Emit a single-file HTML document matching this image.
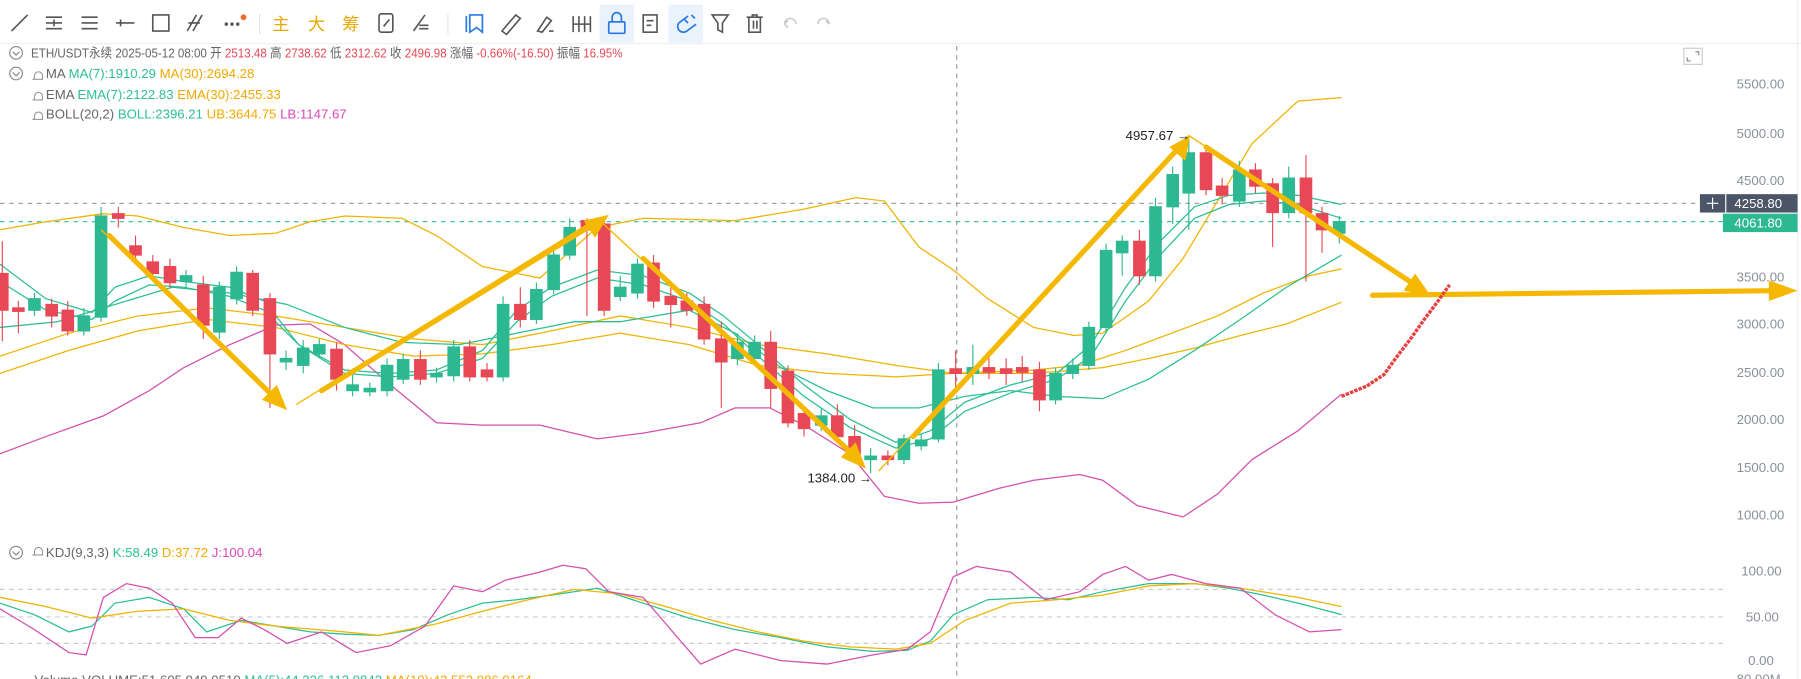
<!DOCTYPE html>
<html><head><meta charset="utf-8"><style>
html,body{margin:0;padding:0;background:#fff;overflow:hidden}
svg{display:block}
text{font-family:"Liberation Sans","Noto Sans CJK SC",sans-serif}
</style></head><body>
<svg width="1801" height="679" viewBox="0 0 1568 591" preserveAspectRatio="none" xmlns="http://www.w3.org/2000/svg">
<rect width="1568" height="591" fill="#fff"/>
<line x1="0" y1="38" x2="1568" y2="38" stroke="#eceef1"/>
<rect x="522" y="4" width="30" height="33" fill="#eaf2fc"/>
<rect x="582" y="4" width="30" height="33" fill="#eaf2fc"/>
<g stroke="#555" stroke-width="1.4" fill="none">
<path d="M10 27 L24 13"/>
<path d="M40 15h14M40 20h14M40 25h14M47 17v6"/>
<path d="M71 15h14M71 20h14M71 25h14"/>
<path d="M101 20h16M105 17v6"/>
<rect x="133" y="13" width="14" height="14"/>
<path d="M163 27l8-14M168 27l8-14M164 20h10"/>
</g>
<g fill="#555"><circle cx="197" cy="21" r="1.5"/><circle cx="202" cy="21" r="1.5"/><circle cx="207" cy="21" r="1.5"/></g>
<circle cx="212" cy="15" r="2.5" fill="#f06a2a"/>
<line x1="226" y1="12" x2="226" y2="30" stroke="#e2e4e8"/>
<text x="237" y="26" font-size="15" fill="#e9a800">主</text>
<text x="268" y="26" font-size="15" fill="#e9a800">大</text>
<text x="298" y="26" font-size="15" fill="#e9a800">筹</text>
<g stroke="#555" stroke-width="1.4" fill="none">
<rect x="330" y="12" width="12" height="16" rx="2"/><path d="M334 23l5-6"/>
<path d="M360 27l10-14M365 22h8M365 25h8"/>
</g>
<line x1="390" y1="12" x2="390" y2="30" stroke="#e2e4e8"/>
<g stroke="#2a7be4" stroke-width="1.5" fill="none">
<path d="M406 14v14M409 13h11v15l-5-4-6 4z"/>
<path d="M599 14l-8 6a5 5 0 0 0 7 7l8-6M596 17l3 3M602 13l3 3"/>
<rect x="530" y="19" width="14" height="10" rx="1"/><path d="M533 19v-4a4 4 0 0 1 8 0v4"/>
</g>
<g stroke="#555" stroke-width="1.4" fill="none">
<path d="M437 27l12-14 4 3-12 14z"/>
<path d="M468 27l8-12 4 3-8 10zM478 27h4"/>
<path d="M499 14v14M504 14v14M509 14v14M514 14v14M499 21h15"/>
<rect x="560" y="13" width="12" height="15"/><path d="M563 18h6M563 22h4"/>
<path d="M620 13h14l-5 7v8l-4-2v-6z"/>
<path d="M650 15h14M655 15v-2h4v2M652 15v13h10v-13M656 18v7M659 18v7"/>
</g>
<g stroke="#ccc" stroke-width="1.4" fill="none"><path d="M683 21a5 5 0 0 1 10 0M683 21l3-3M683 21l3 3"/><path d="M722 21a5 5 0 0 0-10 0M722 21l-3-3"/></g>
<g font-size="11.5">
<circle cx="14" cy="46" r="5.5" stroke="#888" fill="none"/><path d="M11 45l3 3 3-3" stroke="#888" fill="none"/>
<text x="27" y="50" fill="#666" textLength="515" lengthAdjust="spacingAndGlyphs">ETH/USDT永续  2025-05-12 08:00  开 <tspan fill="#e84855">2513.48</tspan> 高 <tspan fill="#e84855">2738.62</tspan> 低 <tspan fill="#e84855">2312.62</tspan> 收 <tspan fill="#e84855">2496.98</tspan> 涨幅 <tspan fill="#e84855">-0.66%(-16.50)</tspan> 振幅 <tspan fill="#e84855">16.95%</tspan></text>
<circle cx="14" cy="64" r="5.5" stroke="#888" fill="none"/><path d="M11 63l3 3 3-3" stroke="#888" fill="none"/>
<text x="40" y="68" fill="#666">MA  <tspan fill="#2cbf95">MA(7):1910.29</tspan>  <tspan fill="#f0a800">MA(30):2694.28</tspan></text>
<text x="40" y="86" fill="#666">EMA  <tspan fill="#2cbf95">EMA(7):2122.83</tspan>  <tspan fill="#f0a800">EMA(30):2455.33</tspan></text>
<text x="40" y="103" fill="#666">BOLL(20,2)  <tspan fill="#2cbf95">BOLL:2396.21</tspan>  <tspan fill="#f0a800">UB:3644.75</tspan>  <tspan fill="#d946b6">LB:1147.67</tspan></text>
<g stroke="#999" fill="none" stroke-width="1"><path d="M30 66a3.5 3.5 0 0 1 7 0v3h-8l1-1zM30 84a3.5 3.5 0 0 1 7 0v3h-8l1-1zM30 101a3.5 3.5 0 0 1 7 0v3h-8l1-1z"/></g>
</g>
<rect x="1466" y="42" width="16" height="14" stroke="#ccc" fill="none"/>
<path d="M1469 50v3h3M1479 48v-3h-3" stroke="#888" fill="none"/>
<line x1="1565" y1="0" x2="1565" y2="591" stroke="#eceef1"/>
<g font-size="11.5" fill="#8a8f99">
<text x="1512" y="77">5500.00</text><text x="1512" y="120">5000.00</text><text x="1512" y="161">4500.00</text>
<text x="1512" y="245">3500.00</text><text x="1512" y="286">3000.00</text><text x="1512" y="328">2500.00</text>
<text x="1512" y="369">2000.00</text><text x="1512" y="411">1500.00</text><text x="1512" y="452">1000.00</text>
<text x="1516" y="501">100.00</text><text x="1520" y="541">50.00</text><text x="1522" y="579">0.00</text><text x="1512" y="595">80.00M</text>
</g>
<line x1="0" y1="177" x2="1480" y2="177" stroke="#999" stroke-dasharray="4,4"/>
<line x1="0" y1="193" x2="1500" y2="193" stroke="#2cbf95" stroke-dasharray="4,4"/>
<line x1="833" y1="40" x2="833" y2="591" stroke="#999" stroke-dasharray="4,4"/>
<line x1="0" y1="513" x2="1500" y2="513" stroke="#ccc" stroke-dasharray="4,4"/>
<line x1="0" y1="537" x2="1500" y2="537" stroke="#ccc" stroke-dasharray="4,4"/>
<line x1="0" y1="560" x2="1500" y2="560" stroke="#ccc" stroke-dasharray="4,4"/>
<rect x="1480" y="169" width="22" height="16" fill="#4b5567"/><path d="M1486 177h10M1491 172v10" stroke="#fff"/>
<rect x="1503" y="169" width="62" height="16" fill="#4b5567"/><text x="1510" y="181" font-size="11.5" fill="#fff">4258.80</text>
<rect x="1500" y="186" width="65" height="16" fill="#2cb890"/><text x="1510" y="198" font-size="11.5" fill="#fff">4061.80</text>
<g fill="none" stroke-width="1.1">
<polyline stroke="#f0b400" points="0,200 40,193 90,186 120,188 160,198 200,205 240,203 270,193 300,188 350,190 380,205 420,232 470,242 520,198 560,190 640,192 700,182 745,172 770,175 800,215 830,235 860,260 900,285 935,292 960,290 1000,262 1030,225 1060,175 1090,125 1130,88 1168,85"/>
<polyline stroke="#d44fae" points="0,395 40,380 90,362 130,340 160,320 200,300 240,283 270,282 300,300 340,335 380,368 420,370 470,370 520,382 560,377 610,368 640,355 670,355 700,370 740,395 770,432 800,438 830,437 870,425 900,418 940,413 960,418 990,440 1030,450 1060,430 1090,400 1130,375 1168,343"/>
<polyline stroke="#f0b400" points="0,310 60,290 120,275 180,268 240,275 300,285 360,295 420,300 480,288 540,275 600,285 660,300 720,308 780,318 830,325 900,322 940,318 980,305 1020,290 1060,275 1100,255 1140,240 1168,234"/>
<polyline stroke="#f0b400" points="0,325 60,305 120,288 180,278 240,285 300,300 360,310 420,308 480,300 540,290 600,300 660,318 720,325 780,328 830,325 900,325 960,320 1000,312 1040,303 1080,292 1120,282 1168,263"/>
<polyline stroke="#2cbf95" points="0,285 50,280 100,265 150,250 200,255 250,265 300,285 350,298 400,300 450,290 500,280 540,280 600,270 640,290 680,320 720,340 760,355 800,355 840,345 880,340 920,345 960,347 1000,330 1040,305 1080,278 1120,250 1168,222"/>
<polyline stroke="#2cbf95" points="0,230 40,260 80,272 100,250 130,240 160,245 200,250 230,262 260,300 300,322 340,325 380,322 420,305 450,270 480,250 520,235 560,240 600,255 630,275 660,300 700,335 740,365 780,385 810,375 840,350 880,335 920,325 950,300 980,250 1010,210 1040,180 1070,170 1100,168 1130,170 1168,178"/>
<polyline stroke="#2cbf95" points="0,245 40,270 80,278 100,262 130,248 160,250 200,258 230,270 260,300 300,325 340,328 380,325 420,312 450,280 480,258 520,242 560,248 600,262 630,282 660,310 700,345 740,372 780,390 810,382 840,358 880,342 920,330 950,310 980,262 1010,222 1040,190 1070,178 1100,175 1130,178 1168,190"/>
</g>
<g stroke-width="1">
<g fill="#e84855" stroke="#e84855">
<line x1="2" y1="210" x2="2" y2="297"/><rect x="-3" y="238" width="10" height="32"/>
<line x1="16" y1="262" x2="16" y2="290"/><rect x="11" y="268" width="10" height="3"/>
<line x1="45" y1="260" x2="45" y2="285"/><rect x="40" y="265" width="10" height="10"/>
<line x1="59" y1="262" x2="59" y2="292"/><rect x="54" y="270" width="10" height="18"/>
<line x1="103" y1="180" x2="103" y2="198"/><rect x="98" y="186" width="10" height="4"/>
<line x1="118" y1="205" x2="118" y2="230"/><rect x="113" y="214" width="10" height="8"/>
<line x1="133" y1="222" x2="133" y2="245"/><rect x="128" y="228" width="10" height="10"/>
<line x1="148" y1="225" x2="148" y2="250"/><rect x="143" y="232" width="10" height="14"/>
<line x1="177" y1="240" x2="177" y2="295"/><rect x="172" y="248" width="10" height="35"/>
<line x1="220" y1="235" x2="220" y2="275"/><rect x="215" y="238" width="10" height="32"/>
<line x1="235" y1="255" x2="235" y2="355"/><rect x="230" y="260" width="10" height="48"/>
<line x1="293" y1="298" x2="293" y2="340"/><rect x="288" y="304" width="10" height="26"/>
<line x1="366" y1="305" x2="366" y2="335"/><rect x="361" y="313" width="10" height="17"/>
<line x1="409" y1="296" x2="409" y2="332"/><rect x="404" y="302" width="10" height="26"/>
<line x1="424" y1="316" x2="424" y2="332"/><rect x="419" y="322" width="10" height="6"/>
<line x1="453" y1="250" x2="453" y2="285"/><rect x="448" y="265" width="10" height="13"/>
<line x1="511" y1="190" x2="511" y2="275"/><rect x="506" y="192" width="10" height="8"/>
<line x1="526" y1="190" x2="526" y2="275"/><rect x="521" y="195" width="10" height="75"/>
<line x1="569" y1="222" x2="569" y2="268"/><rect x="564" y="229" width="10" height="33"/>
<line x1="584" y1="250" x2="584" y2="285"/><rect x="579" y="258" width="10" height="7"/>
<line x1="598" y1="255" x2="598" y2="275"/><rect x="593" y="262" width="10" height="8"/>
<line x1="613" y1="258" x2="613" y2="300"/><rect x="608" y="265" width="10" height="30"/>
<line x1="628" y1="280" x2="628" y2="355"/><rect x="623" y="295" width="10" height="20"/>
<line x1="671" y1="288" x2="671" y2="355"/><rect x="666" y="298" width="10" height="40"/>
<line x1="686" y1="318" x2="686" y2="372"/><rect x="681" y="323" width="10" height="45"/>
<line x1="700" y1="355" x2="700" y2="380"/><rect x="695" y="360" width="10" height="13"/>
<line x1="729" y1="352" x2="729" y2="385"/><rect x="724" y="362" width="10" height="18"/>
<line x1="744" y1="370" x2="744" y2="400"/><rect x="739" y="380" width="10" height="15"/>
<line x1="773" y1="392" x2="773" y2="405"/><rect x="768" y="397" width="10" height="3"/>
<line x1="832" y1="305" x2="832" y2="340"/><rect x="827" y="321" width="10" height="4"/>
<line x1="861" y1="310" x2="861" y2="330"/><rect x="856" y="320" width="10" height="4"/>
<line x1="876" y1="312" x2="876" y2="335"/><rect x="871" y="321" width="10" height="4"/>
<line x1="890" y1="310" x2="890" y2="332"/><rect x="885" y="320" width="10" height="4"/>
<line x1="905" y1="315" x2="905" y2="358"/><rect x="900" y="322" width="10" height="26"/>
<line x1="992" y1="200" x2="992" y2="248"/><rect x="987" y="210" width="10" height="30"/>
<line x1="1050" y1="128" x2="1050" y2="170"/><rect x="1045" y="133" width="10" height="32"/>
<line x1="1064" y1="155" x2="1064" y2="178"/><rect x="1059" y="162" width="10" height="8"/>
<line x1="1093" y1="142" x2="1093" y2="168"/><rect x="1088" y="148" width="10" height="14"/>
<line x1="1108" y1="155" x2="1108" y2="215"/><rect x="1103" y="160" width="10" height="25"/>
<line x1="1137" y1="135" x2="1137" y2="245"/><rect x="1132" y="155" width="10" height="30"/>
<line x1="1151" y1="180" x2="1151" y2="220"/><rect x="1146" y="186" width="10" height="14"/>
</g>
<g fill="#2cb890" stroke="#2cb890">
<line x1="30" y1="255" x2="30" y2="275"/><rect x="25" y="260" width="10" height="10"/>
<line x1="73" y1="268" x2="73" y2="292"/><rect x="68" y="275" width="10" height="13"/>
<line x1="88" y1="180" x2="88" y2="280"/><rect x="83" y="188" width="10" height="88"/>
<line x1="162" y1="235" x2="162" y2="250"/><rect x="157" y="240" width="10" height="5"/>
<line x1="191" y1="245" x2="191" y2="295"/><rect x="186" y="250" width="10" height="39"/>
<line x1="206" y1="232" x2="206" y2="265"/><rect x="201" y="237" width="10" height="23"/>
<line x1="249" y1="305" x2="249" y2="322"/><rect x="244" y="312" width="10" height="3"/>
<line x1="264" y1="296" x2="264" y2="325"/><rect x="259" y="303" width="10" height="15"/>
<line x1="278" y1="295" x2="278" y2="312"/><rect x="273" y="300" width="10" height="8"/>
<line x1="307" y1="325" x2="307" y2="345"/><rect x="302" y="335" width="10" height="5"/>
<line x1="322" y1="333" x2="322" y2="345"/><rect x="317" y="338" width="10" height="3"/>
<line x1="337" y1="312" x2="337" y2="345"/><rect x="332" y="318" width="10" height="22"/>
<line x1="351" y1="308" x2="351" y2="334"/><rect x="346" y="313" width="10" height="17"/>
<line x1="380" y1="320" x2="380" y2="333"/><rect x="375" y="325" width="10" height="3"/>
<line x1="395" y1="296" x2="395" y2="332"/><rect x="390" y="302" width="10" height="25"/>
<line x1="438" y1="258" x2="438" y2="332"/><rect x="433" y="265" width="10" height="63"/>
<line x1="467" y1="246" x2="467" y2="282"/><rect x="462" y="252" width="10" height="26"/>
<line x1="482" y1="215" x2="482" y2="256"/><rect x="477" y="222" width="10" height="30"/>
<line x1="496" y1="190" x2="496" y2="226"/><rect x="491" y="198" width="10" height="24"/>
<line x1="540" y1="240" x2="540" y2="262"/><rect x="535" y="250" width="10" height="8"/>
<line x1="555" y1="225" x2="555" y2="260"/><rect x="550" y="230" width="10" height="25"/>
<line x1="642" y1="290" x2="642" y2="318"/><rect x="637" y="298" width="10" height="14"/>
<line x1="657" y1="292" x2="657" y2="318"/><rect x="652" y="298" width="10" height="14"/>
<line x1="715" y1="355" x2="715" y2="375"/><rect x="710" y="362" width="10" height="8"/>
<line x1="758" y1="390" x2="758" y2="412"/><rect x="753" y="397" width="10" height="3"/>
<line x1="787" y1="378" x2="787" y2="404"/><rect x="782" y="382" width="10" height="18"/>
<line x1="802" y1="378" x2="802" y2="392"/><rect x="797" y="383" width="10" height="5"/>
<line x1="817" y1="316" x2="817" y2="385"/><rect x="812" y="322" width="10" height="60"/>
<line x1="847" y1="300" x2="847" y2="335"/><rect x="842" y="320" width="10" height="5"/>
<line x1="919" y1="320" x2="919" y2="352"/><rect x="914" y="325" width="10" height="23"/>
<line x1="934" y1="312" x2="934" y2="330"/><rect x="929" y="318" width="10" height="7"/>
<line x1="948" y1="280" x2="948" y2="322"/><rect x="943" y="285" width="10" height="33"/>
<line x1="963" y1="212" x2="963" y2="290"/><rect x="958" y="218" width="10" height="67"/>
<line x1="977" y1="205" x2="977" y2="240"/><rect x="972" y="210" width="10" height="10"/>
<line x1="1006" y1="172" x2="1006" y2="245"/><rect x="1001" y="180" width="10" height="60"/>
<line x1="1021" y1="145" x2="1021" y2="195"/><rect x="1016" y="152" width="10" height="28"/>
<line x1="1035" y1="118" x2="1035" y2="200"/><rect x="1030" y="133" width="10" height="35"/>
<line x1="1079" y1="140" x2="1079" y2="180"/><rect x="1074" y="148" width="10" height="27"/>
<line x1="1122" y1="145" x2="1122" y2="190"/><rect x="1117" y="155" width="10" height="30"/>
<line x1="1166" y1="188" x2="1166" y2="212"/><rect x="1161" y="193" width="10" height="10"/>
</g>
</g>
<g stroke="#f5b800" stroke-width="1.2" fill="none">
<path d="M258 352 L520 190 L752 405"/>
<path d="M765 410 L1035 118 L1168 205"/>
<path d="M88 200 L248 355"/>
</g>
<g stroke="#f5b800" stroke-width="4.5" fill="none" stroke-linecap="round">
<path d="M95 205 L238 345"/>
<path d="M280 340 L515 196"/>
<path d="M560 225 L742 395"/>
<path d="M795 380 L1025 130"/>
<path d="M1050 128 L1232 248"/>
<path d="M1195 257 L1545 253"/>
</g>
<g fill="#f5b800">
<path d="M250 357 L228 348 L241 335 Z"/>
<path d="M530 187 L518 207 L508 192 Z"/>
<path d="M754 408 L732 398 L745 385 Z"/>
<path d="M1036 118 L1032 140 L1018 128 Z"/>
<path d="M1246 258 L1222 253 L1232 238 Z"/>
<path d="M1565 253 L1540 244 L1540 262 Z"/>
</g>
<path d="M1168 345 L1190 336 L1205 326 L1215 312 L1228 295 L1240 278 L1252 262 L1262 248" stroke="#e84040" stroke-width="3" fill="none" stroke-dasharray="3,1"/>
<text x="980" y="122" font-size="11.5" fill="#222">4957.67 →</text>
<text x="703" y="420" font-size="11.5" fill="#222">1384.00 →</text>
<circle cx="14" cy="481" r="5.5" stroke="#888" fill="none"/><path d="M11 480l3 3 3-3" stroke="#888" fill="none"/>
<path d="M30 480a3.5 3.5 0 0 1 7 0v3h-8l1-1z" stroke="#999" fill="none"/>
<text x="40" y="485" font-size="11.5" fill="#666">KDJ(9,3,3)  <tspan fill="#2cbf95">K:58.49</tspan>  <tspan fill="#f0a800">D:37.72</tspan>  <tspan fill="#d946b6">J:100.04</tspan></text>
<g fill="none" stroke-width="1.1">
<polyline stroke="#2cbf95" points="0,525 30,535 60,550 80,545 100,525 130,520 160,530 180,550 210,540 240,545 270,550 300,552 330,553 360,548 390,535 420,525 450,522 480,518 520,512 560,525 600,538 640,548 680,555 720,563 760,567 790,566 810,558 830,535 860,522 900,520 930,522 960,515 1000,508 1040,508 1070,512 1100,518 1130,525 1168,535"/>
<polyline stroke="#f0b400" points="0,520 40,528 80,538 120,532 160,530 200,540 240,545 300,550 330,553 380,543 420,532 460,522 500,513 540,517 580,528 620,540 660,550 700,558 740,563 780,565 810,560 840,540 880,525 920,522 960,518 1000,510 1040,508 1080,512 1130,520 1168,528"/>
<polyline stroke="#d44fae" points="0,530 30,548 60,568 75,570 90,520 110,508 130,512 150,525 170,555 190,555 210,538 230,548 250,560 280,550 310,568 340,562 370,545 395,510 420,515 440,505 470,498 490,492 510,495 530,515 560,520 590,555 610,578 640,565 680,575 720,578 760,570 790,565 810,550 830,502 850,493 880,498 910,522 940,515 960,500 980,493 1000,505 1020,500 1050,508 1080,512 1110,535 1140,550 1168,548"/>
</g>
<text x="30" y="596" font-size="11.5" fill="#666">Volume  VOLUME:51,605,949.0510  <tspan fill="#2cbf95">MA(5):44,326,112.9842</tspan>  <tspan fill="#f0a800">MA(10):42,552,986.9164</tspan></text>
</svg>
</body></html>
